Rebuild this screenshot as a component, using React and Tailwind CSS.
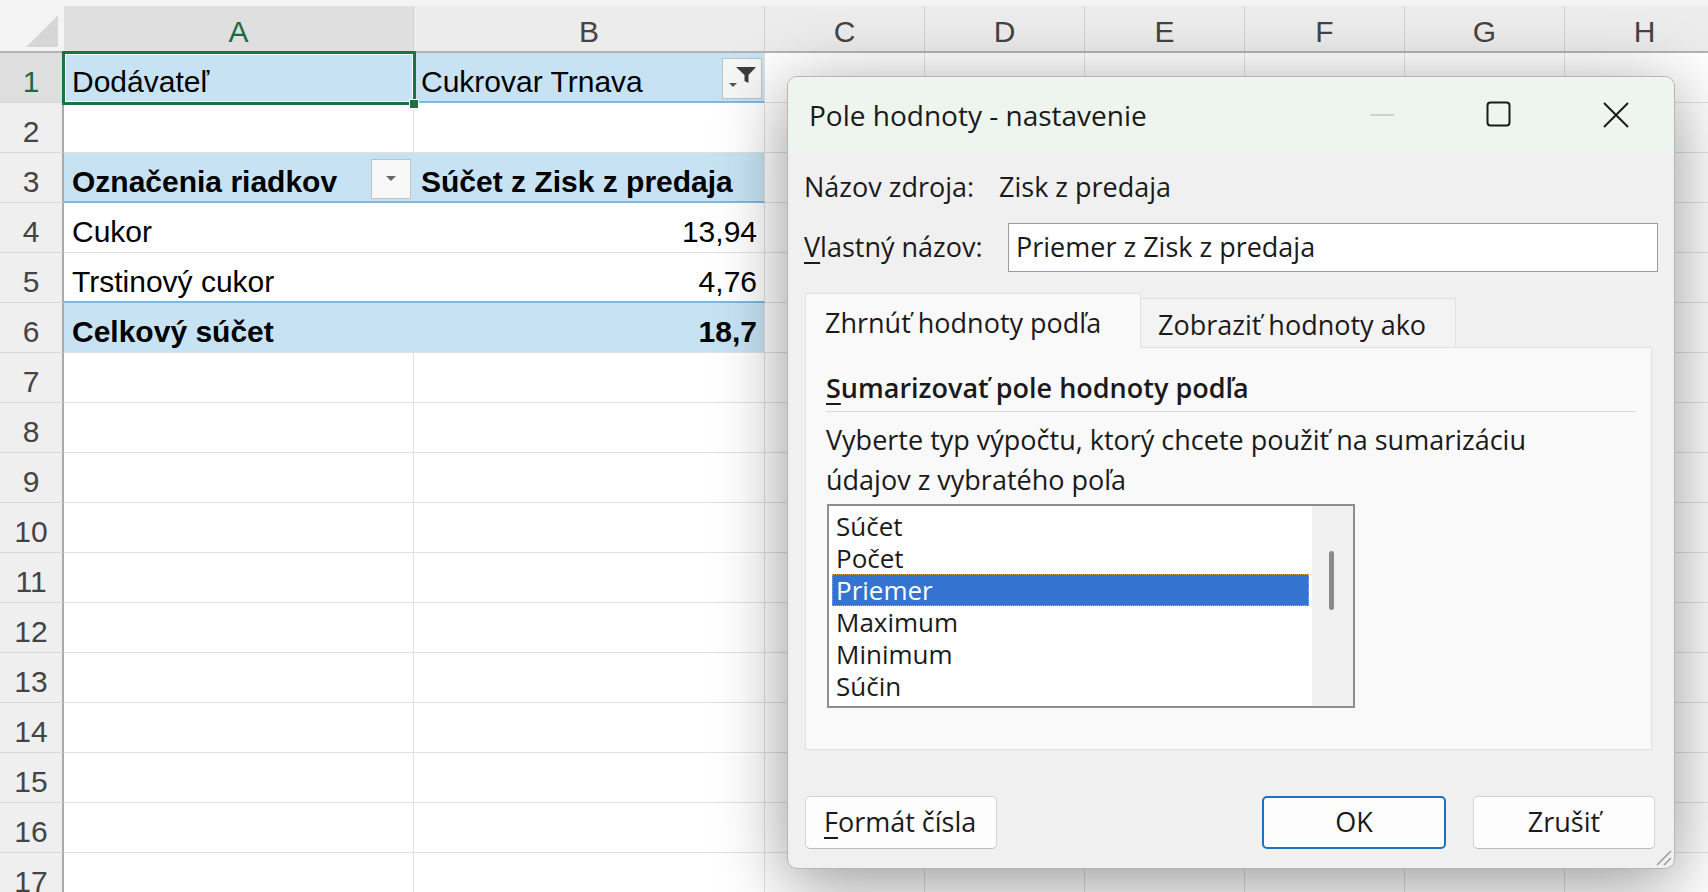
import React from "react";

const otherCols = ["C", "D", "E", "F", "G", "H"];

const rows = [
  { n: 1, a: "Dodávateľ", b: "Cukrovar Trnava", fill: true, line: true, filter: true, selected: true },
  { n: 2 },
  { n: 3, a: "Označenia riadkov", b: "Súčet z Zisk z predaja", fill: true, bold: true, line: true, dropdown: true, pivot: true },
  { n: 4, a: "Cukor", b: "13,94", num: true, pivot: true },
  { n: 5, a: "Trstinový cukor", b: "4,76", num: true, pivot: true, line: true },
  { n: 6, a: "Celkový súčet", b: "18,7", num: true, fill: true, bold: true, pivot: true },
  { n: 7 },
  { n: 8 },
  { n: 9 },
  { n: 10 },
  { n: 11 },
  { n: 12 },
  { n: 13 },
  { n: 14 },
  { n: 15 },
  { n: 16 },
  { n: 17 },
];

const summaryTypes = ["Súčet", "Počet", "Priemer", "Maximum", "Minimum", "Súčin"];

function HeaderRow() {
  return (
    <div className="flex h-[53px] border-b-2 border-[#b3b3b3] bg-[#f4f4f4]">
      <div className="relative h-full w-[64px] shrink-0">
        <svg className="absolute left-0 top-0" width="64" height="51" viewBox="0 0 64 51">
          <polygon points="58,15 58,47 26,47" fill="#d6d6d6" />
        </svg>
      </div>
      <div className="flex h-[45px] w-[350px] shrink-0 items-center justify-center self-end border-r border-[#d2d2d2] bg-[#dfdfdf] pt-[6px] leading-[34px] text-[#1e6b41]">
        A
      </div>
      <div className="flex h-[45px] w-[351px] shrink-0 items-center justify-center self-end border-r border-[#d2d2d2] bg-[#ececec] pt-[6px] leading-[34px] text-[#444]">
        B
      </div>
      {otherCols.map((c) => (
        <div
          key={c}
          className="flex h-[45px] w-[160px] shrink-0 items-center justify-center self-end border-r border-[#d2d2d2] bg-[#ececec] pt-[6px] leading-[34px] text-[#444]"
        >
          {c}
        </div>
      ))}
    </div>
  );
}

function FilterButton() {
  return (
    <div className="absolute right-[2px] top-[5px] h-[41px] w-[40px] border border-[#c2c2c2] bg-[#f6f6f6]">
      <svg width="38" height="39" viewBox="0 0 38 39">
        <polygon points="13,8 33,8 25.5,16 25.5,24 21.5,22 21.5,16" fill="#3c3c3c" />
        <polygon points="6,24 14,24 10,28" fill="#555" />
      </svg>
    </div>
  );
}

function DropdownButton() {
  return (
    <div className="absolute right-[3px] top-[6px] flex h-[40px] w-[40px] items-center justify-center border border-[#c2c2c2] bg-[#f8f8f8]">
      <svg width="14" height="8" viewBox="0 0 14 8">
        <polygon points="2,1 12,1 7,6" fill="#666" />
      </svg>
    </div>
  );
}

function SheetRow({ row }) {
  const fill = row.fill ? "bg-[#c7e3f3]" : "bg-white";
  const bottom = row.line
    ? "border-b-2 border-b-[#7db9e0]"
    : "border-b border-b-[#e1e1e1]";
  const weight = row.bold ? "font-bold" : "font-normal";

  return (
    <div className="flex h-[50px]">
      <div
        className={
          row.selected
            ? "flex h-full w-[64px] shrink-0 justify-center border-r-2 border-b border-r-[#a9a9a9] border-b-[#d8d8d8] bg-[#dedede] leading-[58px] text-[#1e6b41]"
            : "flex h-full w-[64px] shrink-0 justify-center border-r-2 border-b border-r-[#a9a9a9] border-b-[#d8d8d8] bg-[#efefef] leading-[58px] text-[#444]"
        }
      >
        {row.n}
      </div>
      <div
        className={`relative h-full w-[350px] shrink-0 whitespace-nowrap px-[8px] leading-[58px] ${fill} ${bottom} ${weight} ${
          row.pivot ? "" : "border-r border-r-[#e1e1e1]"
        }`}
      >
        {row.a}
        {row.dropdown && <DropdownButton />}
      </div>
      <div
        className={`relative h-full w-[351px] shrink-0 whitespace-nowrap border-r border-r-[#e1e1e1] px-[7px] leading-[58px] ${fill} ${bottom} ${weight} ${
          row.num ? "text-right" : "text-left"
        }`}
      >
        {row.b}
        {row.filter && <FilterButton />}
      </div>
      {otherCols.map((c) => (
        <div
          key={c}
          className="h-full w-[160px] shrink-0 border-r border-b border-[#e1e1e1] bg-white"
        />
      ))}
    </div>
  );
}

function Dialog() {
  return (
    <div className="absolute left-[787px] top-[76px] flex h-[793px] w-[888px] flex-col overflow-hidden rounded-[10px] border border-[#b6b6b6] bg-[#f0f0f0] font-['Open_Sans','Noto_Sans',sans-serif] text-[27px] text-[#1a1a1a] shadow-[0_14px_70px_rgba(0,0,0,0.42)]">
      {/* Title bar */}
      <div className="flex h-[75px] shrink-0 items-center bg-[#edf5ee]">
        <div className="flex-1 whitespace-nowrap pl-[21px] text-[28px] leading-none">
          Pole hodnoty - nastavenie
        </div>
        <div className="flex h-full w-[117px] items-center justify-center">
          <svg width="26" height="4" viewBox="0 0 26 4">
            <line x1="1" y1="2" x2="25" y2="2" stroke="#c4c4c4" strokeWidth="1.5" />
          </svg>
        </div>
        <div className="flex h-full w-[117px] items-center justify-center">
          <svg width="26" height="27" viewBox="0 0 26 27">
            <rect x="1.5" y="1.5" width="22" height="23" rx="3" fill="none" stroke="#1a1a1a" strokeWidth="2" />
          </svg>
        </div>
        <div className="flex h-full w-[117px] items-center justify-center">
          <svg width="26" height="26" viewBox="0 0 26 26">
            <path d="M1 1 L25 25 M25 1 L1 25" stroke="#1a1a1a" strokeWidth="2" fill="none" />
          </svg>
        </div>
      </div>

      {/* Body */}
      <div className="flex flex-1 flex-col px-[16px]">
        <div className="mt-[11px] flex h-[48px] items-center whitespace-nowrap">
          <div className="w-[195px]">Názov zdroja:</div>
          <div>Zisk z predaja</div>
        </div>
        <div className="mt-[12px] flex h-[49px] items-center whitespace-nowrap">
          <div className="w-[204px]">
            <span className="underline underline-offset-[5px]">V</span>lastný názov:
          </div>
          <div className="flex h-full w-[650px] items-center border border-[#9c9c9c] bg-white px-[7px]">
            Priemer z Zisk z predaja
          </div>
        </div>

        {/* Tabs */}
        <div className="mt-[21px] flex items-end pl-[1px] whitespace-nowrap">
          <div className="relative z-10 -mb-px flex h-[55px] w-[336px] items-center border border-b-0 border-[#e0e0e0] bg-[#f9f9f9] pl-[19px] pt-[4px]">
            Zhrnúť hodnoty podľa
          </div>
          <div className="flex h-[49px] w-[315px] items-center border border-b-0 border-l-0 border-[#e0e0e0] bg-[#f3f3f3] pl-[17px] pt-[4px]">
            Zobraziť hodnoty ako
          </div>
        </div>
        <div className="ml-[1px] h-[403px] w-[847px] border border-[#e0e0e0] bg-[#f9f9f9] pl-[20px] pr-[15px] pt-[20px]">
          <div className="whitespace-nowrap font-semibold leading-[40px]">
            <span className="underline underline-offset-[5px]">S</span>umarizovať pole hodnoty podľa
          </div>
          <div className="mt-[3px] h-px bg-[#d9d9d9]" />
          <div className="mt-[8px] whitespace-nowrap leading-[40px]">
            Vyberte typ výpočtu, ktorý chcete použiť na sumarizáciu
            <br />
            údajov z vybratého poľa
          </div>
          <div className="ml-[1px] mt-[4px] flex h-[204px] w-[528px] border-2 border-[#8e8e8e] bg-white">
            <div className="flex-1 px-[3px] pt-[4px] text-[26px]">
              {summaryTypes.map((t) => (
                <div
                  key={t}
                  className={
                    t === "Priemer"
                      ? "h-[32px] whitespace-nowrap bg-[#3474d0] pl-[4px] leading-[32px] text-white outline-1 -outline-offset-1 outline-dotted outline-[#e9a23b]"
                      : "h-[32px] whitespace-nowrap pl-[4px] leading-[32px]"
                  }
                >
                  {t}
                </div>
              ))}
            </div>
            <div className="flex w-[41px] flex-col bg-[#f0f0f0] pl-[17px] pt-[45px]">
              <div className="h-[59px] w-[5px] rounded-full bg-[#8a8a8a]" />
            </div>
          </div>
        </div>

        {/* Buttons */}
        <div className="mt-[46px] flex h-[53px] whitespace-nowrap pl-[1px] pr-[3px]">
          <button className="w-[192px] rounded-[5px] border border-[#d2d2d2] border-b-[#bdbdbd] bg-[#fdfdfd] pl-[18px] text-left">
            <span className="underline underline-offset-[5px]">F</span>ormát čísla
          </button>
          <div className="flex-1" />
          <button className="w-[184px] rounded-[5px] border-2 border-[#1f6fc3] bg-[#fdfdfd] text-center">
            OK
          </button>
          <button className="ml-[27px] w-[182px] rounded-[5px] border border-[#d2d2d2] border-b-[#bdbdbd] bg-[#fdfdfd] text-center">
            Zrušiť
          </button>
        </div>
      </div>

      {/* resize grip */}
      <svg className="absolute bottom-[2px] right-[2px]" width="18" height="18" viewBox="0 0 18 18">
        <path d="M17 3 L3 17 M17 10 L10 17" stroke="#9a9a9a" strokeWidth="1.5" />
      </svg>
    </div>
  );
}

export default function App() {
  return (
    <div className="relative h-[892px] w-[1708px] overflow-hidden bg-[#f4f4f4] font-['Liberation_Sans',Arial,sans-serif] text-[30px] text-black">
      <HeaderRow />
      {rows.map((r) => (
        <SheetRow key={r.n} row={r} />
      ))}

      {/* active cell A1 */}
      <div className="absolute left-[62px] top-[51px] h-[54px] w-[354px] border-[3px] border-[#1e7145]">
        <div className="h-full w-full border border-white" />
      </div>
      <div className="absolute left-[409px] top-[99px] h-[10px] w-[10px] border border-white bg-[#1e7145]" />

      <Dialog />
    </div>
  );
}
